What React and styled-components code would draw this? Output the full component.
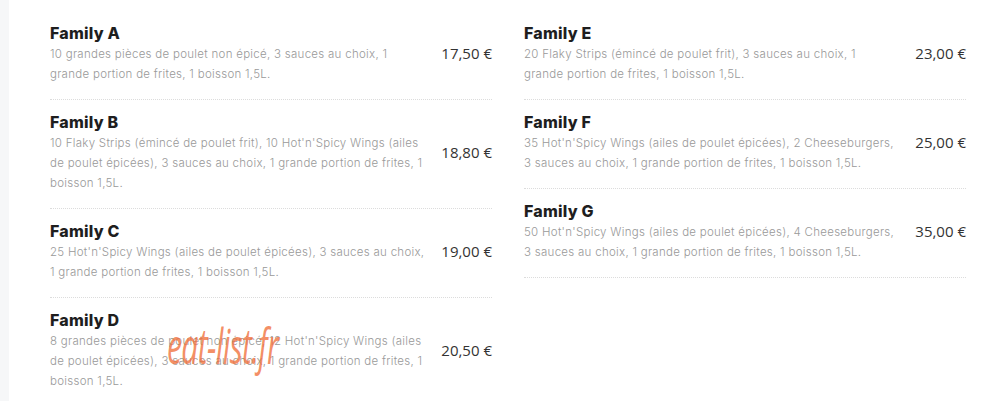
import React from "react";
import styled, { createGlobalStyle } from "styled-components";

const Global = createGlobalStyle`
  html, body { margin: 0; padding: 0; }
  body { background: #f6f7f8; font-family: Inter, "Noto Sans", sans-serif; }
`;

const Page = styled.div`
  margin-left: 9px;
  background: #ffffff;
  min-height: 401px;
  padding: 11px 0 0 41px;
  position: relative;
`;

const Columns = styled.div`
  display: grid;
  grid-template-columns: 442px 442px;
  column-gap: 32px;
  align-items: start;
`;

const Column = styled.div`
  display: flex;
  flex-direction: column;
`;

const Item = styled.div`
  display: grid;
  grid-template-columns: 378px 1fr;
  align-items: center;
  padding: 11px 0 15px;
  border-bottom: 1px dotted #dcdcdc;
`;

const Info = styled.div`
  display: flex;
  flex-direction: column;
`;

const Title = styled.div`
  font-family: Inter, "Noto Sans", sans-serif;
  font-weight: 800;
  font-size: 16px;
  line-height: 22px;
  color: #1e1e1e;
  letter-spacing: 0.2px;
`;

const Desc = styled.div`
  font-family: Inter, "Noto Sans", sans-serif;
  font-weight: 300;
  font-size: 11.5px;
  letter-spacing: 0.28px;
  line-height: 20px;
  color: #999999;
  max-width: ${(p) => p.$max || 378}px;
`;

const Price = styled.div`
  font-family: "Open Sans", "Noto Sans", sans-serif;
  font-size: 15px;
  color: #333333;
  white-space: nowrap;
  text-align: right;
`;

const Watermark = styled.div`
  position: absolute;
  left: 158px;
  top: 320px;
  font-family: "Open Sans", sans-serif;
  font-style: italic;
  font-weight: 400;
  font-size: 50px;
  line-height: 50px;
  letter-spacing: -1px;
  color: rgba(240, 112, 60, 0.78);
  pointer-events: none;
  transform: scaleX(0.6);
  transform-origin: left top;
  white-space: nowrap;
`;

const left = [
  { t: "Family A", d: "10 grandes pièces de poulet non épicé, 3 sauces au choix, 1 grande portion de frites, 1 boisson 1,5L.", p: "17,50 €" },
  { t: "Family B", d: "10 Flaky Strips (émincé de poulet frit), 10 Hot'n'Spicy Wings (ailes de poulet épicées), 3 sauces au choix, 1 grande portion de frites, 1 boisson 1,5L.", p: "18,80 €" },
  { t: "Family C", d: "25 Hot'n'Spicy Wings (ailes de poulet épicées), 3 sauces au choix, 1 grande portion de frites, 1 boisson 1,5L.", p: "19,00 €" },
  { t: "Family D", d: "8 grandes pièces de poulet non épicé, 12 Hot'n'Spicy Wings (ailes de poulet épicées), 3 sauces au choix, 1 grande portion de frites, 1 boisson 1,5L.", p: "20,50 €" },
];

const right = [
  { t: "Family E", d: "20 Flaky Strips (émincé de poulet frit), 3 sauces au choix, 1 grande portion de frites, 1 boisson 1,5L.", p: "23,00 €", w: 365 },
  { t: "Family F", d: "35 Hot'n'Spicy Wings (ailes de poulet épicées), 2 Cheeseburgers, 3 sauces au choix, 1 grande portion de frites, 1 boisson 1,5L.", p: "25,00 €" },
  { t: "Family G", d: "50 Hot'n'Spicy Wings (ailes de poulet épicées), 4 Cheeseburgers, 3 sauces au choix, 1 grande portion de frites, 1 boisson 1,5L.", p: "35,00 €" },
];

function MenuItem({ t, d, p, w }) {
  return (
    <Item>
      <Info>
        <Title>{t}</Title>
        <Desc $max={w}>{d}</Desc>
      </Info>
      <Price>{p}</Price>
    </Item>
  );
}

export default function App() {
  return (
    <>
      <Global />
      <Page>
        <Columns>
          <Column>
            {left.map((i) => <MenuItem key={i.t} {...i} />)}
          </Column>
          <Column>
            {right.map((i) => <MenuItem key={i.t} {...i} />)}
          </Column>
        </Columns>
        <Watermark>eat-list.fr</Watermark>
      </Page>
    </>
  );
}
